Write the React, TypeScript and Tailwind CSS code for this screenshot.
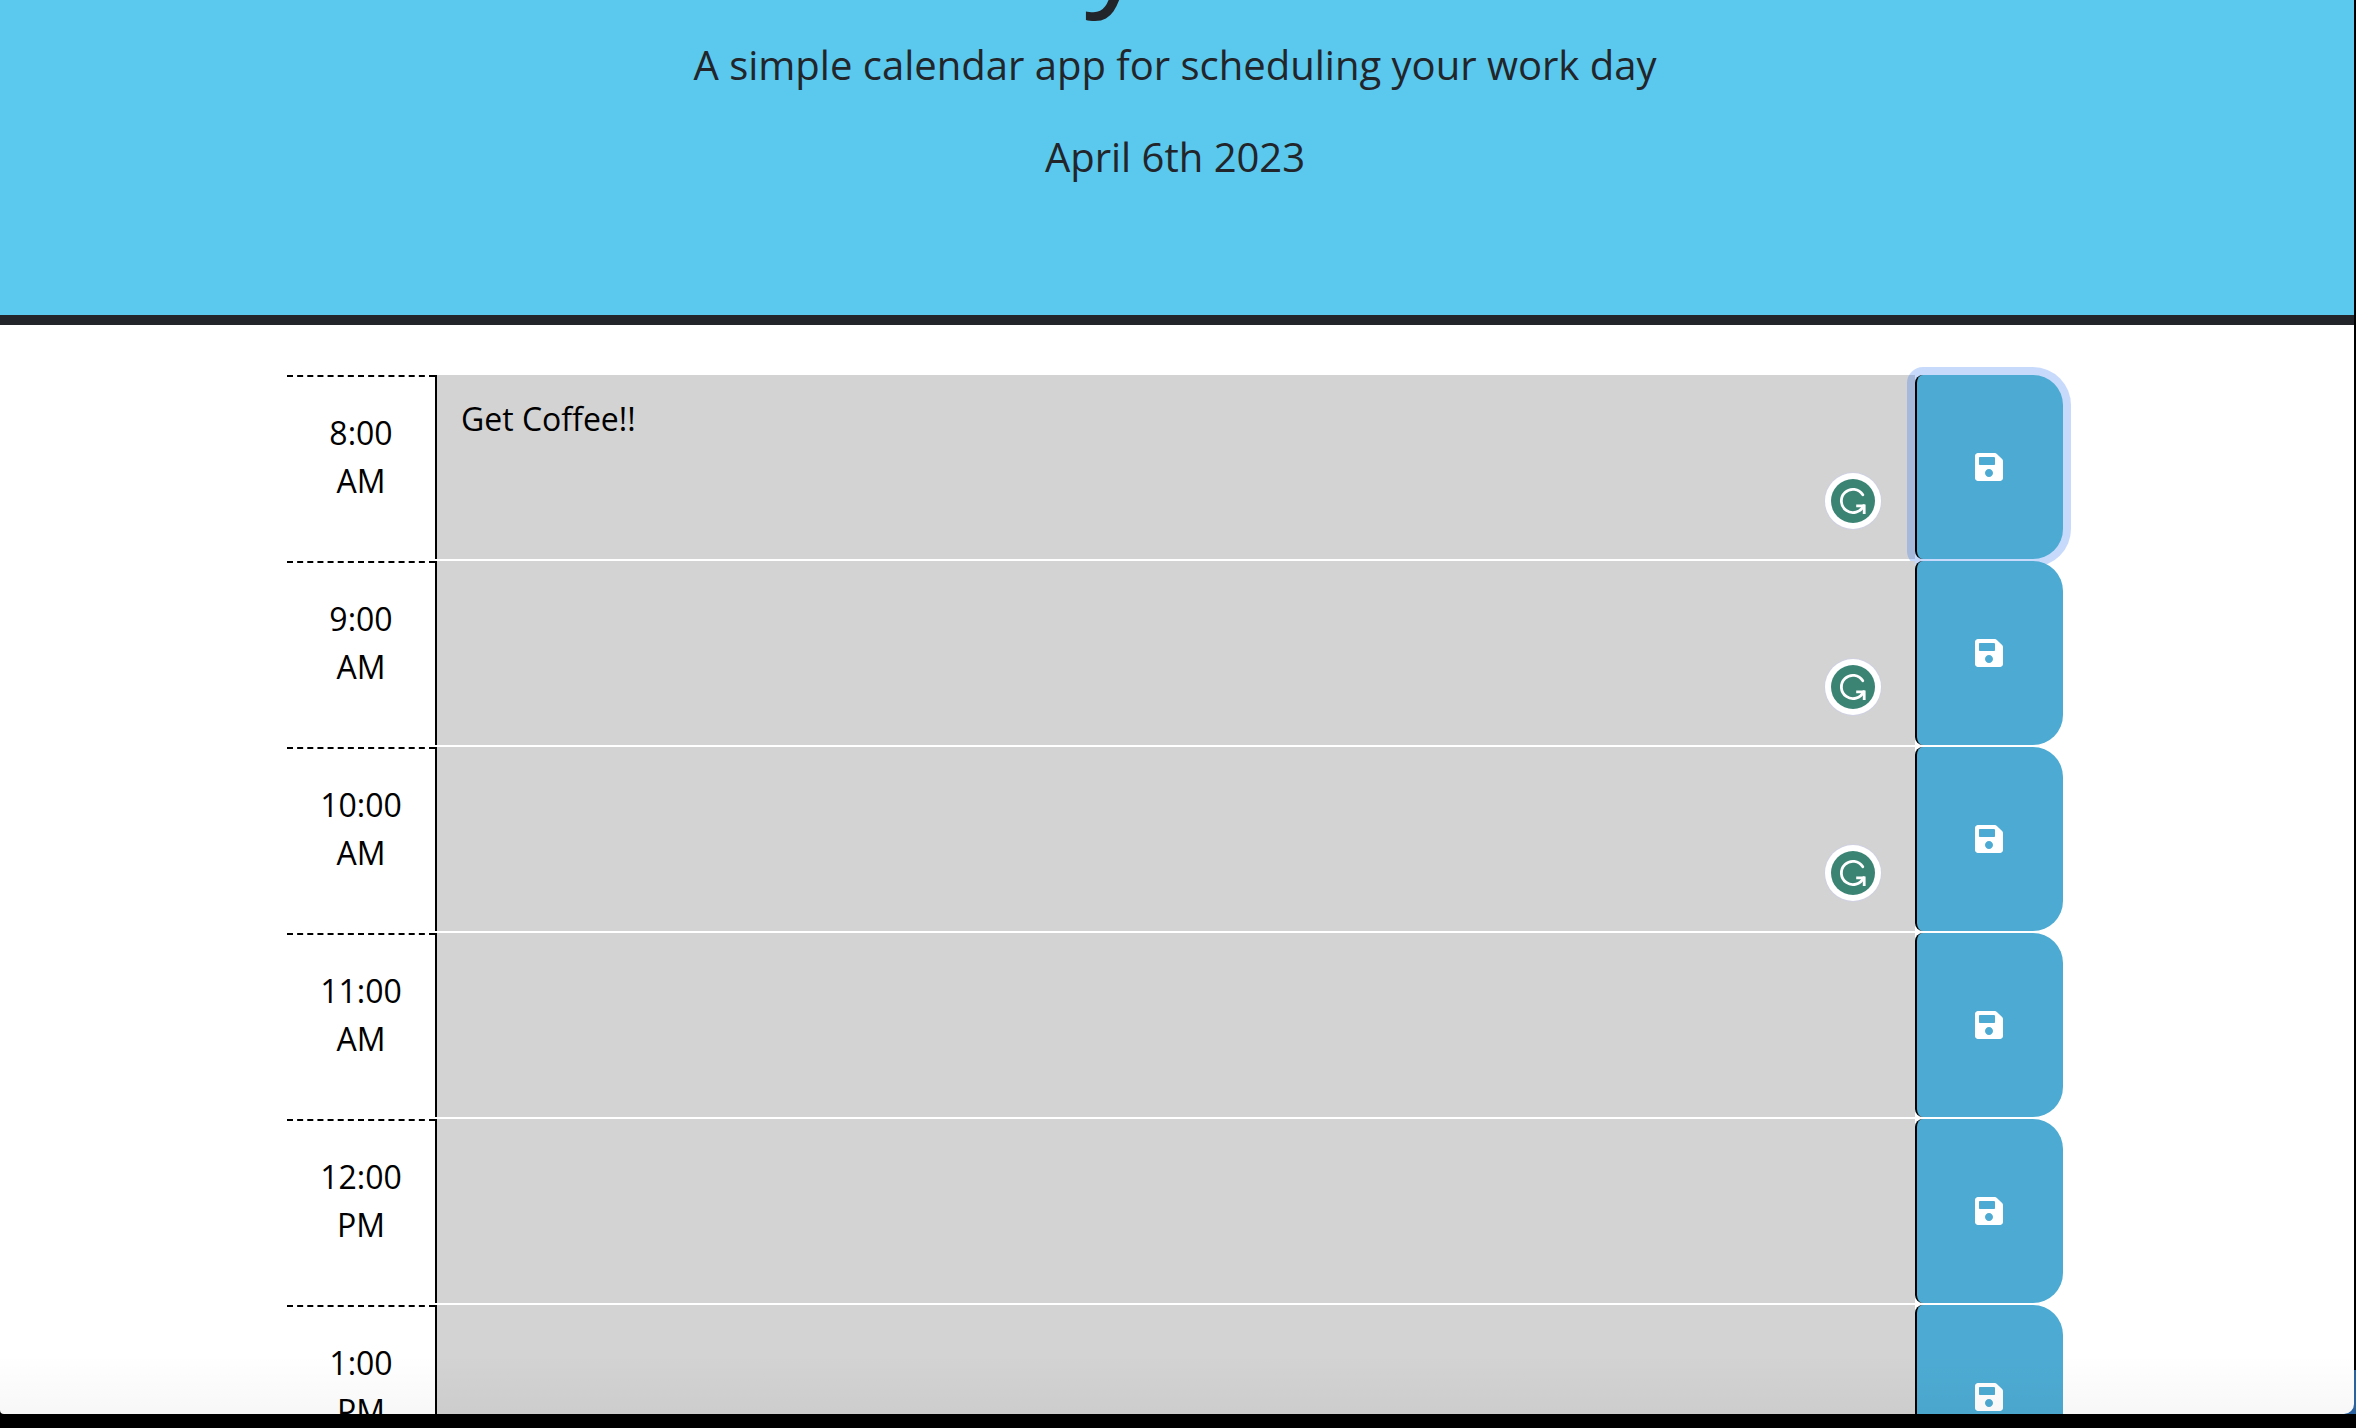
import { FaSave } from "react-icons/fa";

type Slot = { time: string; note?: string; checker?: boolean; focused?: boolean };

const slots: Slot[] = [
  { time: "8:00 AM", note: "Get Coffee!!", checker: true, focused: true },
  { time: "9:00 AM", checker: true },
  { time: "10:00 AM", checker: true },
  { time: "11:00 AM" },
  { time: "12:00 PM" },
  { time: "1:00 PM" },
];

function CheckerBadge() {
  return (
    <svg
      viewBox="0 0 60 60"
      className="pointer-events-none absolute right-8 bottom-7 size-15"
      aria-hidden="true"
    >
      <circle cx="30" cy="30" r="29" fill="#cfd0e0" />
      <circle cx="30" cy="30" r="28" fill="#fff" />
      <circle cx="30" cy="30" r="22" fill="#3b8474" />
      <g fill="none" stroke="#fff" strokeWidth="2.8">
        <path d="M39.8 23.8 A11.6 11.6 0 1 0 40.6 34.6" strokeLinecap="round" />
        <path d="M33.2 34.8 H41.2 V43" />
      </g>
    </svg>
  );
}

function TimeBlock({ time, note, checker, focused }: Slot) {
  return (
    <div className="grid grid-cols-12 border-b-2 border-white">
      <div className="h-46 border-t-2 border-dashed border-black px-6 pt-8 text-center">{time}</div>
      <div className="relative col-span-10">
        <textarea
          aria-label={time}
          defaultValue={note}
          className="block h-46 w-full resize-none border-l-2 border-black bg-[#d3d3d3] px-6 pt-5 outline-none"
        />
        {checker && <CheckerBadge />}
      </div>
      <button
        type="button"
        aria-label={"Save " + time}
        className={
          "relative flex h-46 items-center justify-center rounded-l-lg rounded-r-[30px] border-l-2 border-black bg-[#4dabd3] pr-0.5 text-white" +
          (focused ? " ring-8 ring-[rgba(36,108,244,0.25)]" : "")
        }
      >
        <FaSave />
      </button>
    </div>
  );
}

export default function App() {
  return (
    <div className="flex h-screen flex-col bg-black pb-3.5 font-['Open_Sans','Noto_Sans',sans-serif] text-[32px] leading-12 text-black">
      {/* Desktop showing through beside the window's right edge */}
      <div className="flex min-h-0 flex-1 flex-col bg-[linear-gradient(to_top,#2a62a0_44px,transparent_44px)] bg-[length:16px_100%] bg-right bg-no-repeat pr-0.5">
        <div className="relative flex-1 overflow-hidden rounded-br-[10px] rounded-bl bg-white">
          <header className="flex h-[325px] flex-col items-center justify-end overflow-hidden border-b-10 border-[#222529] bg-[#5bc8ee] pr-1 pb-32 text-center text-[40px] leading-15 text-[#222529]">
            <h1 className="mb-7 text-[128px] leading-33 font-medium whitespace-nowrap">Work Day Scheduler</h1>
            <p className="mb-8">A simple calendar app for scheduling your work day</p>
            <p>April 6th 2023</p>
          </header>
          <main className="pt-[50px] pr-[291px] pl-[287px]">
            {slots.map((slot) => (
              <TimeBlock key={slot.time} {...slot} />
            ))}
          </main>
          <div className="pointer-events-none absolute inset-x-0 bottom-0 h-15 bg-linear-to-b from-transparent to-black/3" />
        </div>
      </div>
    </div>
  );
}
